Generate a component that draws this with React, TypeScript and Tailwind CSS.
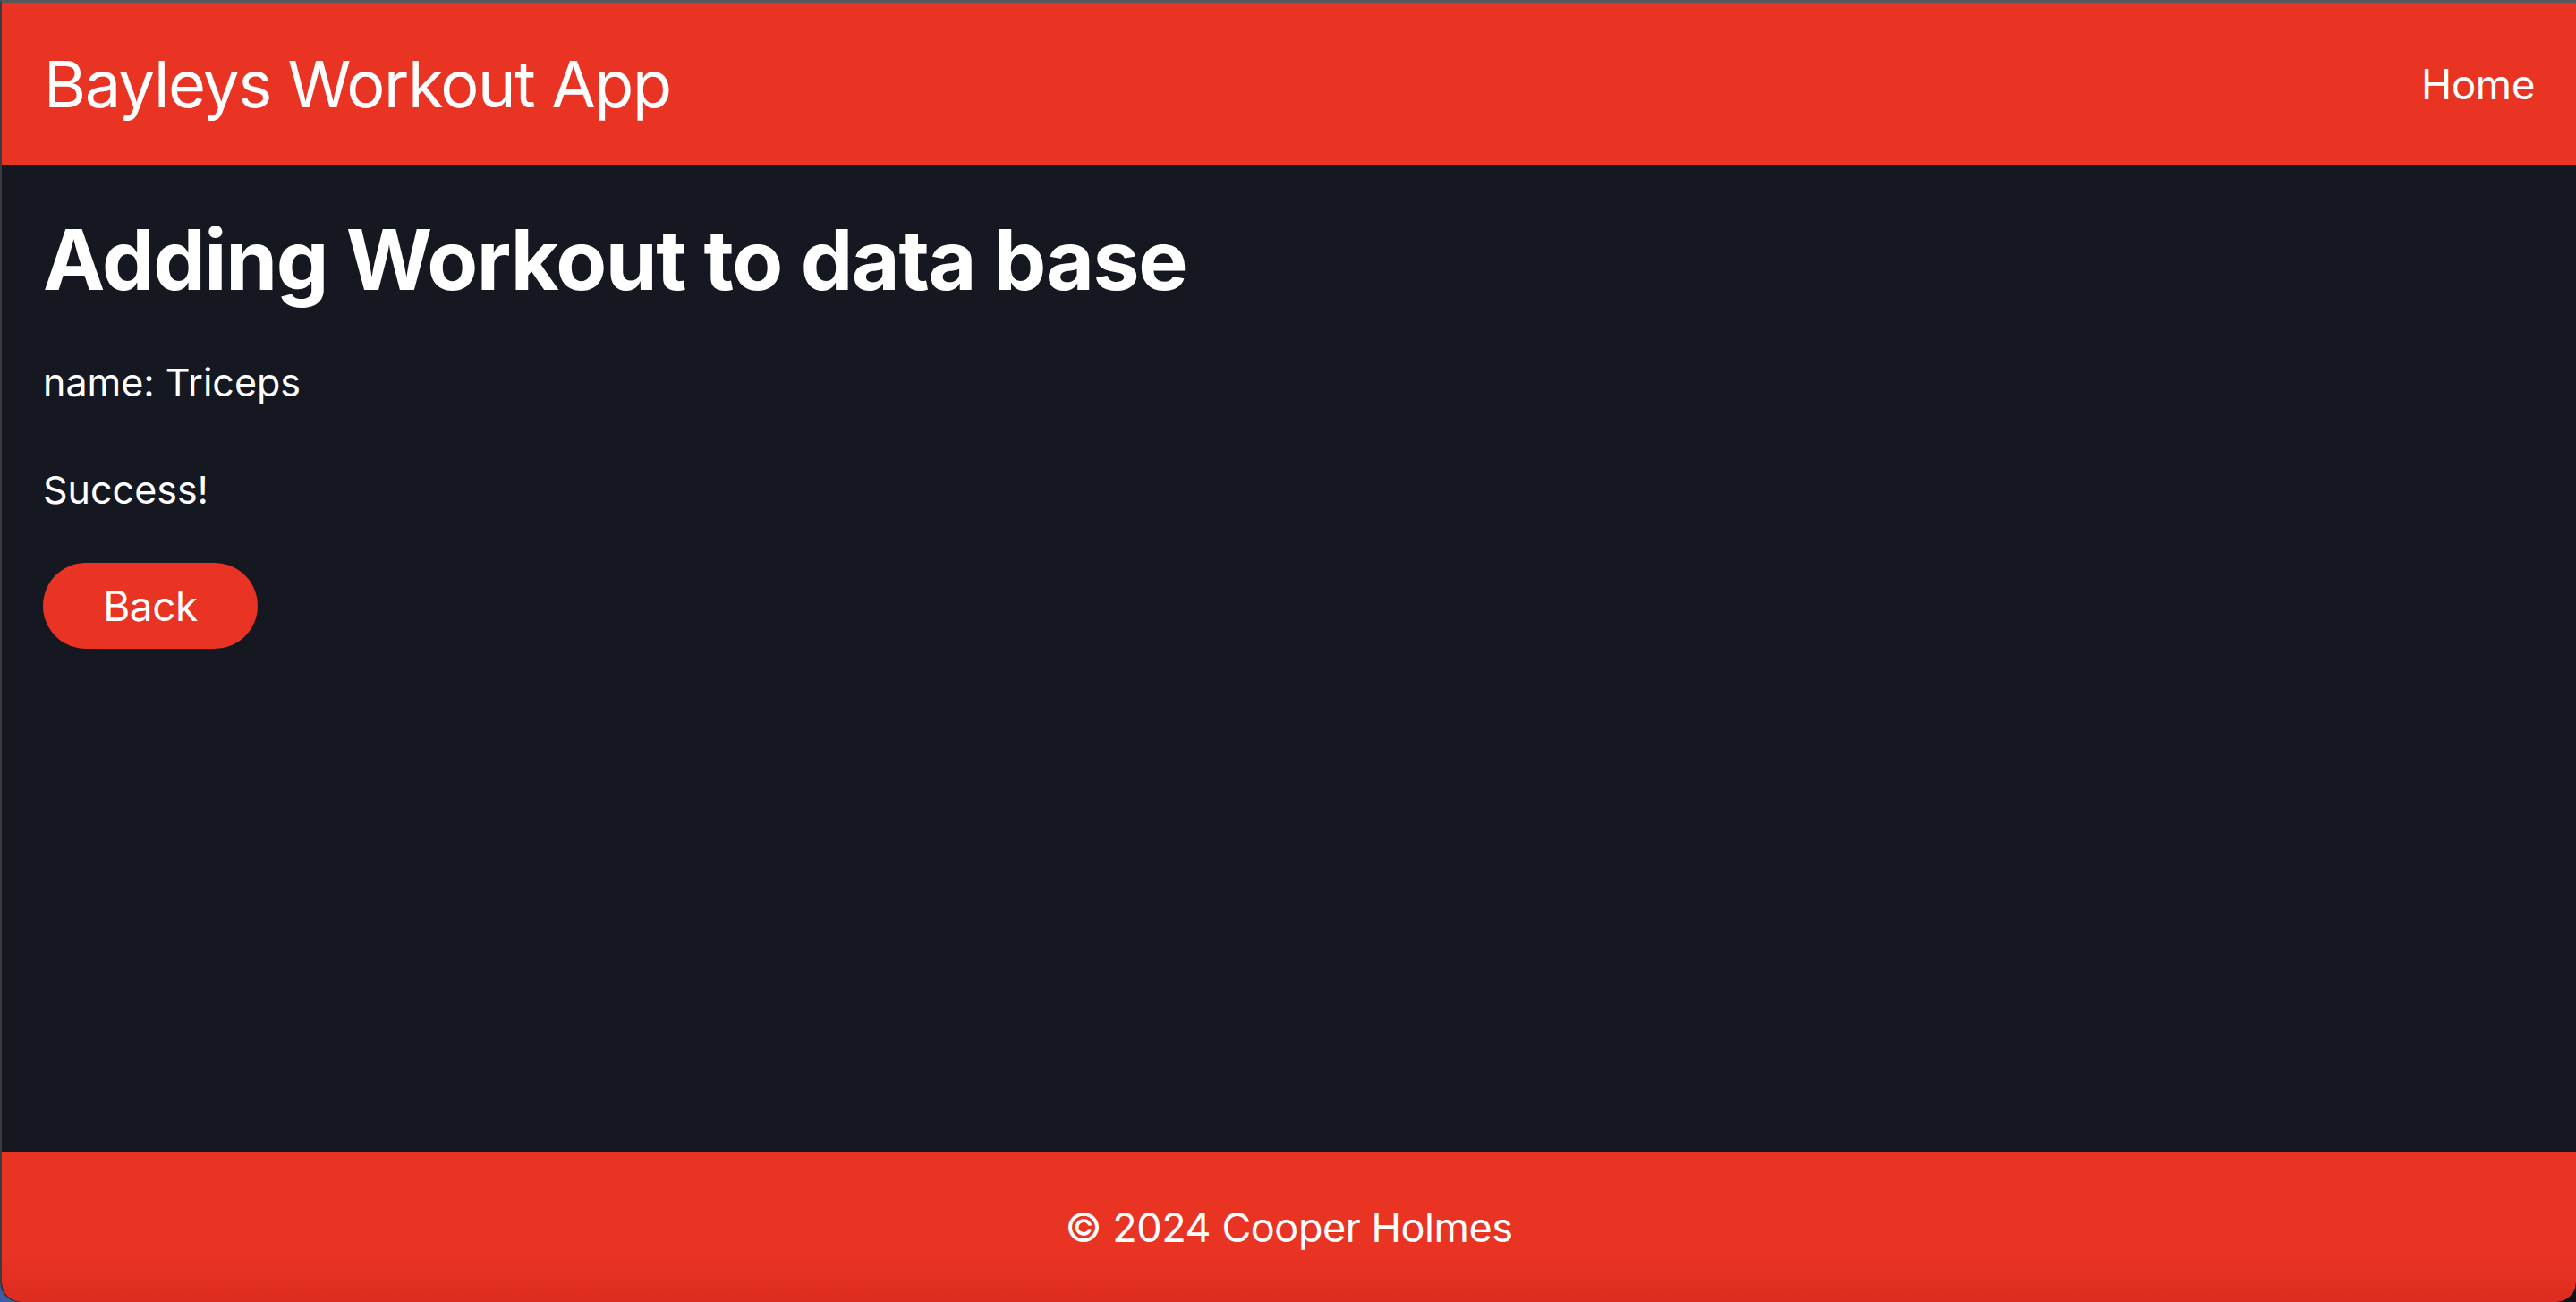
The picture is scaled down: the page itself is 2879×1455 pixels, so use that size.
const font = { fontFamily: 'Inter, "Noto Sans", sans-serif' };

const Header = () => {
  return (
    <header className="h-[183px] flex items-center justify-between pl-[47px] pr-[46px] bg-[#e93323] border-b-2 border-[#0b0c10] text-white">
      <h1 className="text-[72px] font-normal tracking-[-0.02em] leading-none">Bayleys Workout App</h1>
      <a href="#" className="text-[46px] tracking-[-0.01em] leading-none">
        Home
      </a>
    </header>
  );
};

const Footer = () => {
  return (
    <footer className="h-[168px] flex items-center justify-center bg-[#e93323] bg-gradient-to-b from-[#e93323] from-70% to-[#dc2c20] text-white rounded-b-[22px]">
      <p className="text-[45px] tracking-[-0.01em] leading-none">© 2024 Cooper Holmes</p>
    </footer>
  );
};

export default function App() {
  return (
    <div className="h-screen w-full bg-[linear-gradient(90deg,#3c5ea8_0%,#2a3550_50%,#101216_100%)]" style={font}>
      <div className="h-full flex flex-col bg-[#151820] border-t-[3px] border-[#56585b] border-l-2 border-l-[#3a3c40] rounded-b-[22px] overflow-hidden">
        <Header />
        <main className="flex-1 flex flex-col items-start pt-[49px] px-[46px] text-white">
          <h2 className="text-[93px] font-bold leading-[110px] tracking-[-0.015em]">Adding Workout to data base</h2>
          <p className="mt-[54px] text-[43px] leading-[57px]">name: Triceps</p>
          <p className="mt-[63px] text-[43px] leading-[57px]">Success!</p>
          <button className="mt-[53px] h-[96px] w-[240px] rounded-full bg-[#e93323] text-white text-[46px] tracking-[-0.01em] flex items-center justify-center">
            Back
          </button>
        </main>
        <Footer />
      </div>
    </div>
  );
}
